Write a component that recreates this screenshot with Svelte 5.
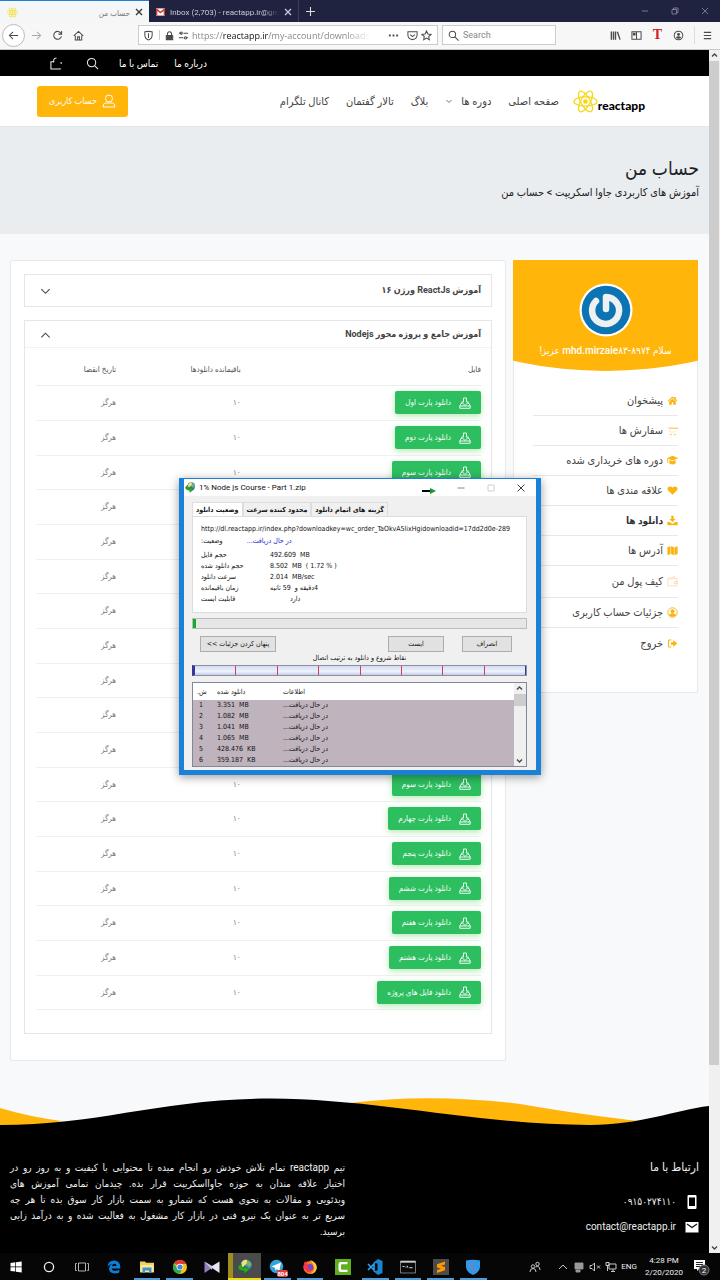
<script>
  const rows = ['پارت اول','پارت دوم','پارت سوم','پارت چهارم','پارت پنجم','پارت ششم','پارت هفتم','پارت هشتم','پارت نهم','پارت اول','پارت دوم','پارت سوم','پارت چهارم','پارت پنجم','پارت ششم','پارت هفتم','پارت هشتم','فایل های پروژه'];
  const menu = [
    ['پیشخوان', 'home'], ['سفارش ها', 'cart'], ['دوره های خریداری شده', 'cap'], ['علاقه مندی ها', 'heart'],
    ['دانلود ها', 'down'], ['آدرس ها', 'map'], ['کیف پول من', 'wallet'], ['جزئیات حساب کاربری', 'user'], ['خروج', 'exit']
  ];
  const parts = ['3.351  MB', '1.082  MB', '1.041  MB', '1.065  MB', '428.476  KB', '359.187  KB'];
  const info = [['حجم فایل', '492.609  MB'], ['حجم دانلود شده', '8.502  MB  ( 1.72 % )'], ['سرعت دانلود', '2.014  MB/sec']];
  const tasks = ['windows', 'cortana', 'taskview', 'edge', 'files', 'chrome', 'kmp', 'idm', 'telegram', 'firefox', 'camtasia', 'vscode', 'cmd', 'sublime', 'shield'];
  const running = ['files', 'chrome', 'telegram', 'firefox', 'vscode', 'cmd', 'sublime', 'shield'];
  const footer = [
    'تیم reactapp تمام تلاش خودش رو انجام میده تا محتوایی با کیفیت و به روز رو در',
    'اختیار علاقه مندان به حوزه جاوااسکریپت قرار بده. چیدمان تمامی آموزش های',
    'ویدئویی و مقالات به نحوی هست که شمارو به سمت بازار کار سوق بده تا هر چه',
    'سریع تر به عنوان یک نیرو فنی در بازار کار مشغول به فعالیت شده و به درآمد زایی',
    'برسید.'
  ];
</script>

{#snippet atom()}
  <svg viewBox="0 0 26 26" fill="none" stroke="#f7d60e" stroke-width="1.3">
    <ellipse cx="13" cy="13" rx="12" ry="4.8" />
    <ellipse cx="13" cy="13" rx="12" ry="4.8" transform="rotate(60 13 13)" />
    <ellipse cx="13" cy="13" rx="12" ry="4.8" transform="rotate(120 13 13)" />
    <circle cx="13" cy="13" r="2.4" fill="#f7d60e" stroke="none" />
  </svg>
{/snippet}

{#snippet globe()}
  <svg viewBox="0 0 16 16">
    <circle cx="9" cy="6" r="5.6" fill="#3f87d8" />
    <path d="M5 3q2-3 5-2l1 3-3 2-2 3-2-2z" fill="#f3e26b" />
    <path d="M10 2q4 0 4.500 4l-3 2-2-3z" fill="#79b84a" />
    <path d="M1 7q-1 5 6 5v3l6-4.500L7 7v2Q4 9 4 5z" fill="#2ba52c" stroke="#12601a" stroke-width=".6" />
  </svg>
{/snippet}

{#snippet menuIcon(name)}
  <svg viewBox="0 0 14 14" fill="#fbb40f" aria-hidden="true">
    {#if name === 'home'}
      <path d="M7 2 .8 7.300l.9 1L7 3.900l5.300 4.400.9-1-2-1.800V2.600H9.300v1.300zM7 4.900 2.800 8.300v4h3.300V9.300h1.800v3h3.300v-4z" />
    {:else if name === 'cart'}
      <path d="M0 3h2l2 6h7l2-5H3" fill="none" stroke="#fde0bd" stroke-width=".8" /><path d="M2.500 3.500H14v1H3z" /><circle cx="5" cy="12" r=".9" /><circle cx="10" cy="12" r=".9" />
    {:else if name === 'cap'}
      <path d="M7 1 14.500 4 7 7 1.500 4.800V10H.3V4zM3 6.500l4 1.600 4-1.600v4q-4 3-8 0z" />
    {:else if name === 'heart'}
      <path d="M7 12.500 1.500 7Q-.3 4.500 1.700 2.600 4.500.7 7 3.500 9.500.7 12.300 2.600 14.300 4.500 12.500 7z" />
    {:else if name === 'down'}
      <path d="M5.500 1h3v4H11L7 9 3 5h2.500zM.5 9h3L7 11.500 10.500 9h3v4H.5z" />
    {:else if name === 'map'}
      <path d="m.5 3 4-1.500v10L.5 13zM5.200 1.500l3.600 1.500v10l-3.600-1.500zM9.500 3l4-1.500v10l-4 1.500z" />
    {:else if name === 'wallet'}
      <path d="M1 3.500h11.500v9H1zM1 3.500 10 1v2.500M9 7h4.500v2.500H9z" fill="none" stroke="#fccf9d" stroke-width=".8" />
    {:else if name === 'user'}
      <circle cx="7" cy="7" r="6" fill="none" stroke="#fbb40f" stroke-width="1.200" /><circle cx="7" cy="5.300" r="2.500" /><path d="M2.800 10.800q0-3 4.200-3t4.200 3Q7 14 2.800 10.800z" />
    {:else}
      <path d="M5.500 2.500H3q-1 0-1 1v7q0 1 1 1h2.500" fill="none" stroke="#fbb40f" stroke-width="1.400" /><path d="M5 5.300h3V2.500L13 7l-5 4.500V8.700H5z" />
    {/if}
  </svg>
{/snippet}

{#snippet taskIcon(name)}
  {#if name === 'idm'}
    {@render globe()}
  {:else}
    <svg viewBox="0 0 16 16" aria-hidden="true">
      {#if name === 'windows'}
        <path d="m2.500 4 4.800-.7v4.300H2.500zM8 3.200l5.700-.8v5.200H8zM2.500 8.300h4.800v4.300l-4.800-.7zM8 8.300h5.700v5.200L8 12.700z" fill="#fff" />
      {:else if name === 'cortana'}
        <circle cx="8" cy="8" r="4.600" fill="none" stroke="#eee" stroke-width="1.300" />
      {:else if name === 'taskview'}
        <path d="M4.500 4h7v8h-7zM2.800 4.500H1.500v7h1.300M13.200 4.500h1.300v7h-1.300" fill="none" stroke="#ddd" stroke-width=".8" />
      {:else if name === 'edge'}
        <path d="M1.500 7.500Q2.500 1.700 8 1.600q6 .1 6.300 6.400v1.400H5.700q.5 2.300 3.600 2.300 2.200 0 4-1v2.700q-1.700 1-4.600 1-5.500-.3-5.700-5Q3.200 6.300 6 5 3.500 5 1.500 7.500zm4.300-.4h4.800q-.2-2.400-2.300-2.400-2 .1-2.500 2.400z" fill="#0b7fd8" />
      {:else if name === 'files'}
        <path d="M1 2.500h5l1 1.300h8v9.700H1z" fill="#f6cf62" /><path d="M1.500 6h13v7h-13z" fill="#fde69a" /><path d="M3.500 8.500h9v5.500H10v-2.500H6V14H3.500z" fill="#3d97cf" />
      {:else if name === 'chrome'}
        <circle cx="8" cy="8" r="7" fill="#fbc116" /><path d="M8 8 2 4.300A7 7 0 0 1 14.200 5H8z" fill="#e33b2e" /><path d="M2 4.300A7 7 0 0 0 7.500 15L10.600 9.500 5 9z" fill="#2da94f" /><circle cx="8" cy="8" r="3.300" fill="#fff" /><circle cx="8" cy="8" r="2.600" fill="#4286f0" />
      {:else if name === 'kmp'}
        <path d="M.5 2.500 8 7.500V9L.5 14z" fill="#8d80b8" /><path d="M15.500 2.500 8 7v2l7.500 5z" fill="#e9e4f4" /><path d="M.5 2.500 8 7v4z" fill="#cbc2e2" />
      {:else if name === 'telegram'}
        <circle cx="7.500" cy="7.500" r="6.700" fill="#32a3dc" /><path d="m2.500 7.500 9.500-4-1.600 8.500-2.500-2L6.500 11.500 6 8.700z" fill="#fff" />
      {:else if name === 'firefox'}
        <circle cx="8" cy="8.500" r="6.500" fill="#ff7a1c" /><path d="M8 1q7 2 6.800 8-1 5.500-6 6 4-3 3.500-6Q12 5 8 1z" fill="#ffd02e" /><circle cx="8" cy="8.500" r="3.400" fill="#7548c9" /><path d="M1.500 9Q1 4 3.500 2l1 2.500 3 .5-2 2q0 4 4.500 4-2 3.500-5.500 1.500z" fill="#f2374b" />
      {:else if name === 'camtasia'}
        <path d="M0 0h16v16H0z" fill="#5fae1d" /><path d="M12.500 5.200V3H5.800Q3.500 3 3.500 5.300v5.400Q3.500 13 5.800 13h6.700v-2.200H7q-1 0-1-1V6.200q0-1 1-1z" fill="#fff" />
      {:else if name === 'vscode'}
        <path d="M11 0l4.500 2v12L11 16l-5-4 4.500-.5V4.500L6 4z" fill="#1985d1" /><path d="m1 5 6 6V5l-6 6" fill="none" stroke="#2ba2ee" stroke-width="1.600" />
      {:else if name === 'cmd'}
        <path d="M.5 2h15v12H.5z" fill="#0a0a0a" stroke="#aaa" stroke-width=".7" /><path d="M.5 2h15v1.700H.5z" fill="#ccc" /><path d="M2.500 7.500h2m1 .7h1m.5-1.500 1 2m1.500 0h3" stroke="#ddd" fill="none" />
      {:else if name === 'sublime'}
        <path d="M0 0h16v16H0z" fill="#4b4b4b" /><path d="m12 2.500-8 2.700v3.300l4 1.200-4 1.300V14l8-2.700V8L8 6.700 12 5.500z" fill="#ff9800" />
      {:else}
        <path d="M1 1.500q7-1.500 14 0V8q-.5 5.500-7 8-6.500-2.500-7-8z" fill="#2d9bea" /><path d="M5 4q-2 5 2 7.500 4 .5 5-3-3 1.500-4.500-1Q6 5.500 9 4 7 3 5 4z" fill="#6f84c8" />
      {/if}
    </svg>
  {/if}
{/snippet}

<div class="screen">
  <header class="tabs">
    <div class="tab active"><span class="fav">{@render atom()}</span><span class="tabname" dir="rtl">حساب من</span><button class="x" aria-label="Close tab"><svg viewBox="0 0 8 8"><path d="m1 1 6 6M7 1 1 7" /></svg></button></div>
    <div class="tab">
      <svg class="gmail" viewBox="0 0 10 8"><path d="M0 0h10v8H0z" fill="#fff" /><path d="M0 8V0h1l4 3.500L9 0h1v8H8.500V3L5 5.800 1.500 3v5z" fill="#d93a31" /></svg>
      <span class="tabname fade">Inbox (2,703) - reactapp.ir@gm</span><button class="x" aria-label="Close tab"><svg viewBox="0 0 8 8"><path d="m1 1 6 6M7 1 1 7" /></svg></button>
    </div>
    <button class="plus" aria-label="New tab"><svg viewBox="0 0 10 10"><path d="M5 0v10M0 5h10" /></svg></button>
    <div class="win">
      <button aria-label="Minimize"><svg viewBox="0 0 8 8"><path d="M1 4h6" /></svg></button>
      <button aria-label="Restore"><svg viewBox="0 0 8 8"><path d="M1 2.500h4.500V7H1zM2.500 2.500V1H7v4.500H5.500" /></svg></button>
      <button aria-label="Close"><svg viewBox="0 0 8 8"><path d="m1 1 6 6M7 1 1 7" /></svg></button>
    </div>
  </header>

  <div class="toolbar">
    <div class="navbtns">
      <button class="back" aria-label="Back"><svg viewBox="0 0 12 12"><path d="M11 6H1.500M5.500 2l-4 4 4 4" /></svg></button>
      <button class="dim" aria-label="Forward"><svg viewBox="0 0 12 12"><path d="M1 6h9.500M6.500 2l4 4-4 4" /></svg></button>
      <button aria-label="Reload"><svg viewBox="0 0 12 12"><path d="M9.800 3.500A4.300 4.300 0 1 0 10.300 7M10.500 1v3.500H7" /></svg></button>
      <button aria-label="Home"><svg viewBox="0 0 12 12"><path d="M.8 6.500 6 1.500l5.200 5M2.500 6v5h7V6M5 11V7.500h2V11" /></svg></button>
    </div>
    <div class="url">
      <svg viewBox="0 0 12 12"><path d="M6 1.500q2 0 4 .5v3.500Q10 9.500 6 11 2 9.500 2 5.500V2q2-.5 4-.5zM6 3.500v5.300" /></svg>
      <i></i>
      <svg viewBox="0 0 12 12"><path d="M2.500 6h7v4.500h-7z" fill="#4a4a4f" /><path d="M3.800 5.500V4q0-2.200 2.200-2.200T8.200 4v1.500" /></svg>
      <svg viewBox="0 0 12 12"><path d="M4 3.500h-3M6 3.500h5M1 8.500h5M9.500 8.500h1.500" /><circle cx="3.500" cy="3.500" r="1.200" /><circle cx="8.200" cy="8.500" r="1.200" /></svg>
      <span class="addr">https://<b>reactapp.ir</b>/my-account/downloads</span>
      <svg viewBox="0 0 12 12"><path d="M1 6h2M5 6h2M9 6h2" stroke-width="2" /></svg>
      <svg viewBox="0 0 12 12"><path d="M1 2h10v4q-.5 4-5 4.500Q1.500 10 1 6zM3.500 5 6 7.200 8.500 5" /></svg>
      <svg viewBox="0 0 12 12"><path d="m6 1 1.500 3.300 3.500.4-2.600 2.400.7 3.500L6 8.900l-3.100 1.700.7-3.500L1 4.700l3.500-.4z" /></svg>
    </div>
    <label class="search"><svg viewBox="0 0 12 12"><circle cx="4.800" cy="4.800" r="3.500" /><path d="m7.500 7.500 4 4" /></svg><input placeholder="Search" aria-label="Search" /></label>
    <div class="tools">
      <svg viewBox="0 0 12 12"><path d="M1.500 1.500v9M3.800 1.500v9M6 1.500v9M8 2l3 8.500" stroke-width="1.500" /></svg>
      <svg viewBox="0 0 12 12"><path d="M1 2h10v8H1zM6 2v8" /><path d="M2 3h3v3H2z" fill="#4a4a4f" stroke="none" /></svg>
      <b>T</b>
      <svg viewBox="0 0 12 12"><circle cx="6" cy="6" r="4.700" /><circle cx="6" cy="4.800" r="1.600" fill="#4a4a4f" stroke="none" /><path d="M3 8.300q3-3 6 0Q6 11 3 8.300z" fill="#4a4a4f" stroke="none" /></svg>
      <i></i>
      <svg viewBox="0 0 12 12"><path d="M2 2.500h8M2 6h8M2 9.500h8" stroke-width="1.300" /></svg>
    </div>
  </div>

  <div class="viewport">
    <main class="page" dir="rtl">
      <div class="topbar" dir="ltr">
        <svg viewBox="0 0 14 14"><path d="M4 5H1v8h10v-1M4 6V3q.5-2 3-2M12 5.500v2" /></svg>
        <svg viewBox="0 0 14 14"><circle cx="6" cy="6" r="4.500" /><path d="m9.500 9.500 3.500 3.500" /></svg>
        <a href="#contact" dir="rtl">تماس با ما</a>
        <a href="#about" dir="rtl">درباره ما</a>
      </div>
      <nav class="nav">
        <a class="logo" href="#home" dir="ltr">{@render atom()}<span>reactapp</span></a>
        <div class="links">
          <a href="#home">صفحه اصلی</a>
          <a href="#courses">دوره ها <svg viewBox="0 0 8 8"><path d="m1.500 3 2.500 2.500L6.500 3" /></svg></a>
          <a href="#blog">بلاگ</a>
          <a href="#forum">تالار گفتمان</a>
          <a href="#telegram">کانال تلگرام</a>
        </div>
        <a class="account" href="#account"><svg viewBox="0 0 14 14"><circle cx="7" cy="4.500" r="3.500" /><path d="M3.500 9h7q2.500.5 2.500 4H1q0-3.500 2.500-4z" /></svg>حساب کاربری</a>
      </nav>
      <section class="hero"><h1>حساب من</h1><p>آموزش های کاربردی جاوا اسکریپت &gt; حساب من</p></section>

      <div class="content">
        <aside class="card side">
          <div class="who">
            <svg viewBox="0 0 54 54"><circle cx="27" cy="27" r="26.500" fill="#fff" /><circle cx="27" cy="27" r="24.300" fill="#0d74b4" /><path d="M27 26V14A13.500 13.500 0 1 1 17 18" fill="none" stroke="#eef1f2" stroke-width="6.500" stroke-linecap="round" stroke-linejoin="round" /></svg>
            <p>سلام <bdi dir="ltr">mhd.mirzaie۸۳-۸۹۷۴</bdi> عزیز!</p>
          </div>
          <ul>
            {#each menu as [label, icon]}
              <li class:current={icon === 'down'} class:tall={icon === 'wallet'}><a href="#{icon}">{@render menuIcon(icon)}{label}</a></li>
            {/each}
          </ul>
        </aside>

        <section class="card main">
          <div class="box closed"><h2>آموزش ReactJs ورژن ۱۶</h2><svg viewBox="0 0 12 12"><path d="m1.500 3.500 4.500 4.500 4.500-4.500" /></svg></div>
          <div class="box open">
            <div class="boxhead"><h2>آموزش جامع و پروژه محور Nodejs</h2><svg viewBox="0 0 12 12"><path d="M1.500 8 6 3.500 10.500 8" /></svg></div>
            <table>
              <thead><tr><th>فایل</th><th>باقیمانده دانلودها</th><th>تاریخ انقضا</th></tr></thead>
              <tbody>
                {#each rows as r}
                  <tr>
                    <td><a class="dl" href="#download"><svg viewBox="0 0 12 12"><path d="M4.500 1h3v4H9.500L6 8.500 2.500 5h2zM3 6.500H2L.8 9h10.400L10 6.500H9M.8 9v2.300h10.400V9" /></svg>دانلود {r}</a></td>
                    <td>۱۰</td><td>هرگز</td>
                  </tr>
                {/each}
              </tbody>
            </table>
          </div>
        </section>
      </div>

      <svg class="wave" viewBox="0 0 709 30" preserveAspectRatio="none">
        <path d="M0 11Q30 20 62 24L40 29H0zM350 6Q430-4 520 7 590 19 640 24L600 29H440z" fill="#ffb50a" />
        <path d="M0 28C100 28 160 2 270 1.500 380 2 480 28 590 28 640 28 675 13 709 9V30H0z" />
      </svg>
      <footer>
        <address>
          <h3>ارتباط با ما</h3>
          <p><svg viewBox="0 0 14 14"><path d="M3.500 0h7q1 0 1 1v12q0 1-1 1h-7q-1 0-1-1V1q0-1 1-1zM4 2.500v8.500h6V2.500z" fill="#fff" fill-rule="evenodd" /></svg><span>۰۹۱۵۰۲۷۴۱۱۰</span></p>
          <p><svg viewBox="0 0 14 14"><path d="M.5 2h13v10.500H.5z" fill="#fff" /><path d="m2 4 5 3.500L12 4" fill="none" stroke="#111" stroke-width="1.200" /></svg><span>contact@reactapp.ir</span></p>
        </address>
        <p class="about">{#each footer as l}<span>{l}</span>{' '}{/each}</p>
      </footer>
    </main>
    <div class="bar" aria-hidden="true">
      <svg viewBox="0 0 11 11"><path d="m3 6.500 2.500-2.500L8 6.500" /></svg>
      <div class="thumb"></div>
      <svg viewBox="0 0 11 11"><path d="M3 4.500 5.500 7 8 4.500" /></svg>
    </div>
  </div>

  <footer class="taskbar">
    <div class="tasks">
      {#each tasks as t}
        <button class:run={running.includes(t)} class:focus={t === 'idm'} aria-label={t}>{@render taskIcon(t)}{#if t === 'telegram'}<em>804</em>{/if}</button>
      {/each}
    </div>
    <div class="tray">
      <svg class="people" viewBox="0 0 12 12"><circle cx="4" cy="5.500" r="1.700" /><path d="M1 11q0-3.500 3-3.500T7 11" /><circle cx="8.500" cy="3" r="1.700" /><path d="M6.500 6q4-2 4.500 3" /></svg>
      <svg viewBox="0 0 12 12"><path d="m2 8 4-4 4 4" /></svg>
      <svg viewBox="0 0 12 12"><path d="M2 2h8v6H2zM3 9h4v2H3z" fill="#999" stroke="#999" /></svg>
      <svg viewBox="0 0 12 12"><path d="M1 4.500h2L5.500 2v8L3 7.500H1zM8 4.500l3 3M11 4.500l-3 3" /></svg>
      <svg viewBox="0 0 12 12"><path d="M4 3h7v5H4zM6 10.500h4M8 8v2M1 1.500h3v3H1zM2.500 4.500V10" /></svg>
      <span>ENG</span>
      <time>4:28 PM<br />2/20/2020</time>
      <svg class="note" viewBox="0 0 18 18"><path d="M2 2h11v9H7l-2 2v-2H2z" fill="#fff" stroke="none" /><path d="M4 4.500h7M4 6.500h7M4 8.500h5" stroke="#111" /><circle cx="12" cy="12" r="5" fill="#333" stroke="#888" /><text x="12" y="15" text-anchor="middle">2</text></svg>
    </div>
  </footer>

  <section class="dialog" aria-label="1% Node js Course - Part 1.zip">
    <div class="title">
      <span class="ico">{@render globe()}</span><span>1% Node js Course - Part 1.zip</span>
      <svg class="arrow" viewBox="0 0 14 8"><path d="M0 3h8v2H0z" /><path d="M8 1l6 3-6 3z" fill="#119b2a" /></svg>
      <button aria-label="Minimize"><svg viewBox="0 0 10 10"><path d="M1.500 5h7" stroke="#777" /></svg></button>
      <button aria-label="Maximize" disabled><svg viewBox="0 0 10 10"><path d="M2 2h6v6H2z" stroke="#ccc" /></svg></button>
      <button aria-label="Close"><svg viewBox="0 0 10 10"><path d="m1.500 1.500 7 7M8.500 1.500l-7 7" /></svg></button>
    </div>
    <div class="body">
      <div class="dtabs"><button class="on">وضعیت دانلود</button><button>محدود کننده سرعت</button><button>گزینه های اتمام دانلود</button></div>
      <div class="panel">
        <div class="link">http://dl.reactapp.ir/index.php?downloadkey=wc_order_TaOkvA5lixHgidownloadid=17dd2d0e-289</div>
        <div class="status"><span dir="ltr">:وضعیت</span><span class="blue" dir="ltr">...در حال دریافت</span></div>
        {#each info as [k, v]}<div class="kv"><span>{k}</span><span>{v}</span></div>{/each}
        <div class="kv"><span>زمان باقیمانده</span><span><bdi dir="rtl">4دقیقه و  59 ثانیه</bdi></span></div>
        <div class="kv"><span>قابلیت ایست</span><span class="in">دارد</span></div>
      </div>
      <div class="progress"><div style="width: 1%"></div></div>
      <div class="btns"><button>&lt;&lt; پنهان کردن جزئیات</button><button>ایست</button><button>انصراف</button></div>
      <div class="cap">نقاط شروع و دانلود به ترتیب اتصال</div>
      <div class="segs">{#each Array(8) as _}<i></i>{/each}</div>
      <div class="list">
        <table>
          <thead><tr><th dir="rtl">ش.</th><th>دانلود شده</th><th>اطلاعات</th></tr></thead>
          <tbody>{#each parts as p, i}<tr><td>{i + 1}</td><td>{p}</td><td>...در حال دریافت</td></tr>{/each}</tbody>
        </table>
        <div class="lbar" aria-hidden="true"><svg viewBox="0 0 11 11"><path d="m3 6.500 2.500-2.500L8 6.500" /></svg><div></div><svg viewBox="0 0 11 11"><path d="M3 4.500 5.500 7 8 4.500" /></svg></div>
      </div>
    </div>
  </section>
</div>

<style>
  :global(body) { margin: 0; }
  .screen, .screen * { box-sizing: border-box; }
  .screen { position: relative; display: flex; flex-direction: column; min-height: 100vh; background: #000; font-family: Roboto, "DejaVu Sans Condensed", "DejaVu Sans", sans-serif; font-size: 9px; color: #333; overflow: hidden; }
  svg { display: block; flex: none; }
  button { border: 0; background: none; padding: 0; margin: 0; font: inherit; color: inherit; display: flex; align-items: center; justify-content: center; }
  a { color: inherit; text-decoration: none; }
  h1, h2, h3, p, ul { margin: 0; padding: 0; font-weight: 400; }
  .tabs, .toolbar { font-family: "Open Sans", "DejaVu Sans Condensed", sans-serif; }

  .tabs { display: flex; height: 22px; background: #202340; color: #c9cad6; font-size: 8px; }
  .tab { display: flex; align-items: center; width: 150px; gap: 5px; padding: 2px 6px 0 7px; border-right: 1px solid #3d3f5a; }
  .tab.active { background: #f5f6f7; color: #777; border-top: 1px solid #1a80d8; padding-top: 1px; width: 149px; border-right: 0; }
  .fav { width: 11px; }
  .gmail { width: 9px; height: 8px; }
  .tabname { flex: 1; white-space: nowrap; overflow: hidden; }
  .fade { font-family: Roboto, sans-serif; mask-image: linear-gradient(90deg, #000 85%, transparent); }
  .x svg { width: 8px; height: 8px; stroke: currentColor; stroke-width: 1.300; }
  .active .x { color: #333; }
  .plus { width: 22px; }
  .plus svg { width: 9px; stroke: #ddd; stroke-width: 1.200; }
  .win { margin-left: auto; display: flex; gap: 22px; padding-right: 11px; }
  .win svg { width: 8px; fill: none; stroke: #8d8ea0; stroke-width: .8; }

  .toolbar { display: flex; align-items: center; height: 28px; background: #f7f7f8; border-bottom: 1px solid #c9c9cc; padding: 0 7px 1px 2px; }
  .toolbar svg { width: 11px; height: 11px; fill: none; stroke: #4a4a4f; stroke-width: 1.100; }
  .navbtns { display: flex; gap: 10px; align-items: center; width: 136px; }
  .back { width: 23px; height: 23px; border: 1px solid #bbb; border-radius: 50%; background: #fff; }
  .dim { opacity: .45; margin-left: -4px; }
  .url { flex: 1; display: flex; align-items: center; gap: 8px; height: 20px; padding: 0 5px 0 4px; background: #fff; border: 1px solid #ccc; }
  .url i { width: 1px; height: 10px; background: #ccc; margin-right: -4px; margin-left: -3px; }
  .url svg + svg { margin-left: -5px; }
  .url span + svg + svg { margin-left: 0; }
  .url .addr { flex: 1; width: 0; overflow: hidden; white-space: nowrap; color: #888; font-size: 9px; margin-left: -5px; mask-image: linear-gradient(90deg, #000 82%, transparent 95%); }
  .addr b { font-weight: 400; color: #111; }
  .search { display: flex; align-items: center; gap: 4px; width: 114px; height: 20px; margin: 0 54px 0 4px; padding: 0 5px; background: #fff; border: 1px solid #ccc; }
  .search input { width: 100%; min-width: 0; border: 0; padding: 0; outline: 0; background: none; font: 9px Roboto, sans-serif; }
  .search input::placeholder { color: #888; }
  .tools { display: flex; align-items: center; gap: 10px; }
  .tools b { color: #c22; font: 700 14px "Liberation Serif", serif; width: 11px; text-align: center; }
  .tools i { width: 1px; height: 18px; background: #ddd; margin-right: -3px; }

  .viewport { display: flex; flex: 1; }
  .page { flex: 1; min-width: 0; display: flex; flex-direction: column; background: #f7f9fb; }
  .bar { width: 11px; background: #f0f0f0; display: flex; flex-direction: column; }
  .bar svg, .lbar svg { width: 11px; height: 11px; fill: none; stroke: #444; stroke-width: 1.300; }
  .thumb { height: 1004px; margin: 0 1px auto 0; background: #cdcdcd; }

  .topbar { height: 26px; background: #000; color: #fff; display: flex; align-items: center; padding-left: 50px; font-size: 10px; }
  .topbar svg { width: 13px; height: 13px; fill: none; stroke: #eee; stroke-width: 1.100; margin-right: 23px; }
  .topbar a { margin-right: 16px; }
  .topbar svg + a { margin-left: -3px; }

  .nav { height: 51px; background: #fff; border-bottom: 1px solid #e3e6e9; display: flex; align-items: center; padding: 0 64px 0 37px; }
  .logo { display: flex; align-items: center; color: #000; }
  .logo :global(svg) { width: 25px; }
  .logo span { font: 900 12px Lato, sans-serif; margin-top: 9px; }
  .links { display: flex; gap: 17px; margin-right: 14px; font-size: 11px; color: #444; white-space: nowrap; }
  .links a { display: flex; align-items: center; gap: 8px; }
  .links svg { width: 8px; fill: none; stroke: #777; }
  .account { margin-right: auto; display: flex; align-items: center; justify-content: center; gap: 5px; width: 91px; height: 31px; border-radius: 3px; background: #ffb50a; color: #fff; font-size: 9px; white-space: nowrap; }
  .account svg { width: 14px; fill: none; stroke: #fff; }

  .hero { height: 107px; background: #e9edf0; padding: 29px 10px 0; color: #1d2126; }
  .hero h1 { font-size: 19px; line-height: 26px; }
  .hero p { font-size: 11px; line-height: 22px; }

  .content { display: grid; grid-template-columns: 185px 1fr; gap: 7px; align-items: start; padding: 26px 11px 0 10px; }
  .card { background: #fff; border: 1px solid #e6e9ec; border-radius: 2px; }
  .side { height: 433px; border-top: 0; }
  .who { margin: 0 -1px; height: 111px; background: #ffb50a; clip-path: ellipse(220px 111px at 50% 0); color: #fff; text-align: center; padding-top: 23px; }
  .who svg { width: 54px; margin: 0 auto 7px; }
  .who p { font-size: 10px; line-height: 14px; white-space: nowrap; }
  .who bdi { font-weight: 500; }
  .side ul { list-style: none; padding: 15px 19px 0; }
  .side li { height: 30px; border-bottom: 1px solid #e6e8ea; font-size: 11px; color: #444; }
  .side li:last-child { border: 0; }
  .side li.tall { height: 32px; }
  .side li.current { font-weight: 700; font-size: 10px; color: #333; }
  .side a { display: flex; align-items: center; gap: 4px; height: 100%; white-space: nowrap; }
  .side a :global(svg) { width: 11px; }

  .main { height: 801px; padding: 13px; }
  .box { border: 1px solid #e4e6e8; }
  .closed, .boxhead { display: flex; align-items: center; justify-content: space-between; padding: 0 10px 0 15px; }
  .closed { height: 33px; padding-bottom: 2px; margin-bottom: 13px; }
  .box h2 { font-size: 9px; font-weight: 700; color: #444; }
  .box h2 + svg { width: 11px; fill: none; stroke: #444; stroke-width: 1.200; margin-top: 3px; }
  .open { height: 714px; }
  .boxhead { height: 27px; border-bottom: 1px solid #f2f2f2; }
  .open table { width: calc(100% - 21px); margin: 0 10px 0 11px; border-collapse: collapse; table-layout: fixed; font-size: 8px; color: #777; }
  .open th { height: 37px; padding: 6px 0 0; font-weight: 400; text-align: right; border-bottom: 1px solid #eee; color: #555; }
  .open th:first-child { width: 54%; }
  .open th:nth-child(2) { width: 28%; }
  .open td { height: 35px; padding: 0; border-bottom: 1px solid #f0f0f0; }
  .open tr:nth-child(3n) td { height: 34px; }
  .dl { display: inline-flex; align-items: center; gap: 8px; height: 23px; padding: 0 10px; border-radius: 2px; background: #2dbe60; color: #fff; box-shadow: 0 2px 6px #8fdc8faa; white-space: nowrap; vertical-align: middle; }
  .dl svg { width: 12px; fill: none; stroke: #fff; stroke-width: .9; }

  .wave { width: 100%; height: 30px; margin-top: 36px; }
  .page > footer { flex: 1; background: #000; color: #eee; display: flex; justify-content: space-between; padding: 33px 10px 0; }
  address { font-style: normal; }
  address h3 { font-size: 12px; line-height: 14px; margin-bottom: 15px; }
  address p { display: flex; align-items: center; gap: 9px; height: 25px; font-size: 10px; }
  address svg { width: 14px; }
  .about { width: 335px; font-size: 10px; line-height: 16px; }
  .about span { display: block; text-align: justify; text-align-last: justify; }
  .about span:last-of-type { text-align-last: right; }

  .taskbar { height: 27px; background: #060606; color: #eee; display: flex; font-family: Roboto, sans-serif; }
  .tasks { display: grid; grid-template-columns: repeat(15, 1fr); width: 68%; }
  .tasks button { position: relative; margin: 0 3px; }
  .tasks button :global(svg) { width: 16px; height: 16px; }
  .tasks .run { box-shadow: inset 0 -2px #4f9ad8; }
  .tasks .focus { margin: 0; background: linear-gradient(90deg, #a08f1c 5px, #4b4b4b 5px); box-shadow: inset 0 -2px #f0dc12; }
  .tasks em { position: absolute; right: 3px; bottom: 3px; background: #e43b3b; border-radius: 2px; color: #fff; font: 700 6px/7px Roboto, sans-serif; }
  .tray { flex: 1; display: flex; align-items: center; justify-content: flex-end; gap: 4px; padding-right: 10px; font-size: 8px; }
  .tray svg { width: 12px; fill: none; stroke: #ddd; stroke-width: .9; }
  .tray .people { margin-right: 12px; }
  .tray time { text-align: center; line-height: 12px; width: 42px; margin: 0 3px 0 2px; }
  .tray .note { width: 18px; }
  .note text { font: 8px Roboto, sans-serif; fill: #fff; stroke: none; }

  .dialog { position: absolute; left: 179px; top: 478px; width: 362px; height: 297px; border: solid #1a80d8; border-width: 1px 5px 5px 5px; background: #f0f0f0; box-shadow: 0 2px 9px #0006; color: #111; font-family: "DejaVu Sans Condensed", "DejaVu Sans", sans-serif; font-size: 7px; display: flex; flex-direction: column; }
  .title { display: flex; align-items: center; height: 20px; background: #fff; font: 8px Roboto, sans-serif; padding: 0 10px 0 1px; gap: 3px; }
  .ico { width: 11px; }
  .title .arrow { width: 14px; margin: 7px 17px 0 auto; }
  .title button { width: 10px; margin-left: 17px; }
  .title .arrow + button { margin-left: 0; }
  .title button svg { width: 10px; fill: none; stroke: #222; stroke-width: .9; }
  .body { padding: 6px 9px 3px 8px; }
  .dtabs { display: flex; height: 14px; }
  .dtabs button { padding: 0 3px; border: 1px solid #ddd; border-bottom: 0; white-space: nowrap; font-weight: 700; font-size: 7px; }
  .dtabs .on { background: #fff; }
  .panel { height: 97px; background: #fff; border: 1px solid #ddd; padding: 6px 8px 0; }
  .link, .kv span, .list td { white-space: pre; }
  .link { overflow: hidden; height: 13px; line-height: 12px; }
  .status { display: flex; gap: 24px; line-height: 11px; margin-bottom: 3px; }
  .blue { color: #22c; }
  .kv { display: grid; grid-template-columns: 69px 1fr; line-height: 11px; }
  .kv .in { padding-left: 20px; }
  .progress { height: 11px; margin-top: 5px; background: #e6e6e6; border: 1px solid #bcbcbc; }
  .progress div { height: 100%; background: #0eb02a; }
  .btns { display: flex; padding: 7px 15px 0 8px; }
  .btns button { width: 50px; height: 16px; background: #e1e1e1; border: 1px solid #adadad; white-space: nowrap; }
  .btns button:first-child { width: 76px; margin-right: auto; }
  .btns button:nth-child(2) { width: 56px; margin-right: 18px; }
  .cap { text-align: center; line-height: 13px; }
  .segs { display: flex; height: 11px; border: 1px solid #8b8fa3; border-left: 3px solid #33389a; background: linear-gradient(#d5dcf0, #eef2fc 60%, #c3cde8); }
  .segs i { flex: 1; border-right: 1px solid #d04050; }
  .segs i:last-child { border-color: #33389a; }
  .list { display: flex; margin-top: 6px; height: 85px; border: 1px solid #82879a; background: #bfb4bd; overflow: hidden; }
  .list table { flex: 1; border-collapse: collapse; table-layout: fixed; }
  .list th { height: 17px; background: #fff; font-weight: 400; text-align: left; padding: 0 0 0 4px; }
  .list th:first-child { width: 20px; }
  .list th:nth-child(2) { width: 66px; }
  .list td { height: 11px; padding: 0 0 0 4px; line-height: 11px; }
  .list td:first-child { padding-left: 6px; }
  .lbar { width: 12px; background: #f0f0f0; display: flex; flex-direction: column; }
  .lbar div { height: 12px; background: #cdcdcd; margin-bottom: auto; }
</style>
